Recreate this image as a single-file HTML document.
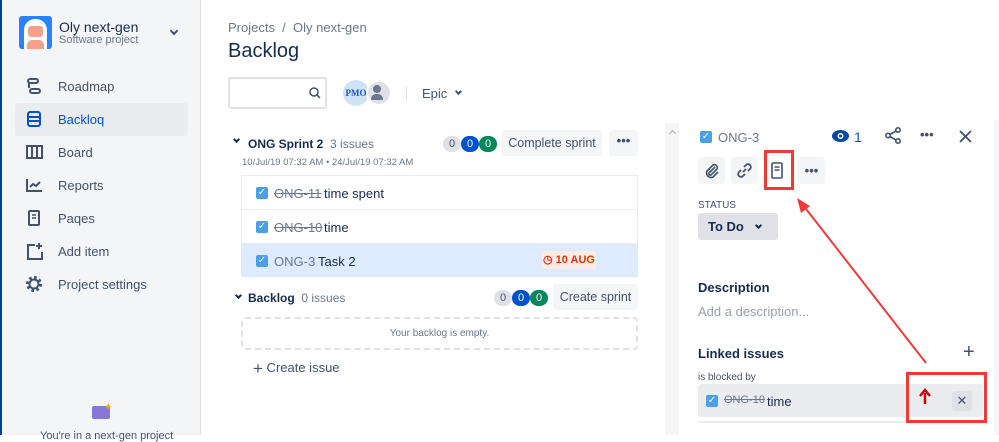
<!DOCTYPE html>
<html><head><meta charset="utf-8"><style>
*{box-sizing:border-box;margin:0;padding:0}
body{width:999px;height:435px;overflow:hidden;font-family:"Liberation Sans",sans-serif;background:#fff;position:relative;color:#172b4d}
.a{position:absolute}
.sb{left:0;top:0;width:201px;height:435px;background:#f4f5f7;border-left:2px solid #0b3d91;border-right:1px solid #dfe1e6}
.nav{left:15px;width:173px;height:33px;font-size:13px;color:#42526e;padding-left:43px;line-height:33px}
.ic{position:absolute;left:11px;top:8px}
.t{font-size:13px;white-space:nowrap}
.lz{border-radius:9px;width:18px;height:16px;font-size:11px;text-align:center;line-height:16px}
.btn{background:#f4f5f7;border-radius:3px;font-size:13px;color:#42526e;text-align:center}
.cb{width:12px;height:12px;background:#4a9fe6;border-radius:2px;color:#fff;font-size:10px;line-height:12px;text-align:center}
.row{left:241px;width:397px;height:34px;border-top:1px solid #ebecf0}
</style></head><body>
<div class="a sb"></div>
<div class="a" style="left:19px;top:16px;width:33px;height:33px;background:#2684ff;border-radius:3px;overflow:hidden">
<div class="a" style="left:5px;top:3px;width:23px;height:30px;background:#fff;border-radius:11px 11px 0 0"></div>
<div class="a" style="left:9px;top:10px;width:15px;height:11px;background:#f4a08a;border-radius:3px"></div>
<div class="a" style="left:8px;top:24px;width:17px;height:9px;background:#f4a08a;border-radius:5px 5px 0 0"></div></div>
<div class="a t" style="left:59px;top:19px;font-size:14px;color:#172b4d">Oly next-gen</div>
<div class="a t" style="left:59px;top:34px;font-size:11px;color:#6b778c">Software project</div>
<div class="a" style="left:171px;top:28px;width:6px;height:6px;border-right:2px solid #42526e;border-bottom:2px solid #42526e;transform:rotate(45deg)"></div>
<div class="a nav" style="top:70px">Roadmap<svg class="ic" width="16" height="16" viewBox="0 0 16 16" fill="none" stroke="#42526e" stroke-width="2"><rect x="2" y="1" width="10" height="4" rx="2"/><rect x="4" y="11" width="10" height="4" rx="2"/><path d="M3 5v5"/></svg></div>
<div class="a nav" style="top:103px;background:#ebecf0;border-radius:3px;color:#0052cc">Backloq<svg class="ic" width="16" height="16" viewBox="0 0 16 16" fill="none" stroke="#0052cc" stroke-width="2"><rect x="2" y="1" width="12" height="14" rx="2"/><path d="M2 6h12M2 10h12"/></svg></div>
<div class="a nav" style="top:136px">Board<svg class="ic" width="17" height="16" viewBox="0 0 17 16" fill="none" stroke="#42526e" stroke-width="2"><rect x="1" y="2" width="15" height="12"/><path d="M6 2v12M11 2v12"/></svg></div>
<div class="a nav" style="top:169px">Reports<svg class="ic" width="17" height="16" viewBox="0 0 17 16" fill="none" stroke="#42526e" stroke-width="2"><path d="M1 2v12h15M4 10l3-3 3 2 4-4"/></svg></div>
<div class="a nav" style="top:202px">Paqes<svg class="ic" width="16" height="16" viewBox="0 0 16 16" fill="none" stroke="#42526e" stroke-width="2"><rect x="3" y="1" width="10" height="14" rx="1"/><path d="M6 5h4M6 8h4" stroke-width="1.5"/></svg></div>
<div class="a nav" style="top:235px">Add item<svg class="ic" width="17" height="17" viewBox="0 0 17 17" fill="none" stroke="#42526e" stroke-width="2"><path d="M9 2H2v14h14V9M13 0v6M10 3h6"/></svg></div>
<div class="a nav" style="top:268px">Project settings<svg class="ic" width="16" height="16" viewBox="0 0 16 16"><circle cx="8" cy="8" r="6" fill="none" stroke="#42526e" stroke-width="4" stroke-dasharray="2.4 2.3"/><circle cx="8" cy="8" r="4.5" fill="none" stroke="#42526e" stroke-width="2"/></svg></div>
<div class="a" style="left:92px;top:406px;width:18px;height:13px;background:#8777d9;border-radius:2px"></div>
<div class="a" style="left:104px;top:402px;color:#ffab00;font-size:10px">✦</div>
<div class="a t" style="left:40px;top:430px;font-size:11px;color:#42526e">You're in a next-gen project</div>

<div class="a t" style="left:228px;top:20px;color:#6b778c">Projects &nbsp;/ &nbsp;Oly next-gen</div>
<div class="a t" style="left:228px;top:40px;font-size:20px;color:#172b4d">Backlog</div>
<div class="a" style="left:228px;top:77px;width:99px;height:32px;border:2px solid #dfe1e6;border-radius:3px"></div>
<svg class="a" style="left:309px;top:87px" width="12" height="12" viewBox="0 0 12 12" fill="none" stroke="#42526e" stroke-width="1.5"><circle cx="5" cy="5" r="4"/><path d="M8 8l3 3"/></svg>
<div class="a" style="left:343px;top:80px;width:26px;height:26px;border-radius:50%;background:#cfe3f7;font:bold 9px 'Liberation Serif',serif;color:#1b57d0;text-align:center;line-height:26px">PMO</div>
<div class="a" style="left:366px;top:80px;width:26px;height:26px;border-radius:50%;background:#dfe1e6;border:2px solid #fff"></div>
<div class="a" style="left:373px;top:85px;width:8px;height:8px;border-radius:50%;background:#6b778c"></div>
<div class="a" style="left:371px;top:94px;width:12px;height:6px;border-radius:5px 5px 0 0;background:#6b778c"></div>
<div class="a" style="left:406px;top:86px;width:1px;height:14px;background:#dfe1e6"></div>
<div class="a t" style="left:422px;top:86px;color:#42526e">Epic</div>
<div class="a" style="left:456px;top:89px;width:5px;height:5px;border-right:2px solid #42526e;border-bottom:2px solid #42526e;transform:rotate(45deg)"></div>

<div class="a" style="left:234px;top:137px;width:5px;height:5px;border-right:2px solid #172b4d;border-bottom:2px solid #172b4d;transform:rotate(45deg)"></div>
<div class="a t" style="left:248px;top:137px;font-size:12px;font-weight:bold;color:#172b4d">ONG Sprint 2 <span style="font-weight:normal;color:#6b778c">&nbsp;3 issues</span></div>
<div class="a t" style="left:242px;top:157px;font-size:9.5px;color:#6b778c">10/Jul/19 07:32 AM • 24/Jul/19 07:32 AM</div>
<div class="a lz" style="left:443px;top:136px;background:#dfe1e6;color:#42526e">0</div>
<div class="a lz" style="left:461px;top:136px;background:#0052cc;color:#fff">0</div>
<div class="a lz" style="left:479px;top:136px;background:#00875a;color:#fff">0</div>
<div class="a btn" style="left:502px;top:130px;width:100px;height:26px;line-height:26px;font-size:12.5px">Complete sprint</div>
<div class="a btn" style="left:609px;top:130px;width:29px;height:26px;line-height:22px;font-weight:bold">•••</div>
<div class="a" style="left:241px;top:175px;width:397px;height:102px;border:1px solid #ebecf0"></div>
<div class="a row" style="top:176px;border:none"><div class="a cb" style="left:15px;top:11px">✓</div><div class="a t" style="left:33px;top:10px;color:#6b778c;text-decoration:line-through">ONG-11</div><div class="a t" style="left:83px;top:10px">time spent</div></div>
<div class="a row" style="top:209px"><div class="a cb" style="left:15px;top:11px">✓</div><div class="a t" style="left:33px;top:10px;color:#6b778c;text-decoration:line-through">ONG-10</div><div class="a t" style="left:83px;top:10px">time</div></div>
<div class="a row" style="top:243px;background:#deebff"><div class="a cb" style="left:15px;top:11px">✓</div><div class="a t" style="left:33px;top:10px;color:#6b778c">ONG-3</div><div class="a t" style="left:77px;top:10px">Task 2</div>
<div class="a" style="left:301px;top:7px;width:54px;height:18px;background:#ffebe6;border-radius:3px;color:#de350b;font-size:11px;font-weight:bold;line-height:18px;text-align:center">◷ 10 AUG</div></div>
<div class="a" style="left:236px;top:293px;width:5px;height:5px;border-right:2px solid #172b4d;border-bottom:2px solid #172b4d;transform:rotate(45deg)"></div>
<div class="a t" style="left:248px;top:291px;font-size:12px;font-weight:bold">Backlog <span style="font-weight:normal;color:#6b778c">&nbsp;0 issues</span></div>
<div class="a lz" style="left:494px;top:290px;background:#dfe1e6;color:#42526e">0</div>
<div class="a lz" style="left:512px;top:290px;background:#0052cc;color:#fff">0</div>
<div class="a lz" style="left:530px;top:290px;background:#00875a;color:#fff">0</div>
<div class="a btn" style="left:553px;top:284px;width:85px;height:26px;line-height:26px;font-size:12.5px">Create sprint</div>
<div class="a" style="left:241px;top:317px;width:397px;height:33px;border:2px dashed #dfe1e6;border-radius:4px;font-size:10px;color:#6b778c;text-align:center;line-height:29px">Your backlog is empty.</div>
<div class="a t" style="left:253px;top:359px;color:#42526e"><span style="font-size:17px;vertical-align:-2px">+</span> Create issue</div>

<div class="a" style="left:665px;top:123px;width:14px;height:312px;background:#f4f5f7"></div>
<div class="a" style="left:670px;top:131px;width:5px;height:5px;border-left:1px solid #aaa;border-top:1px solid #aaa;transform:rotate(45deg)"></div>
<div class="a" style="left:994px;top:120px;width:5px;height:315px;background:#f4f5f7"></div>
<div class="a cb" style="left:700px;top:131px">✓</div>
<div class="a t" style="left:718px;top:130px;color:#6b778c">ONG-3</div>
<svg class="a" style="left:832px;top:129px" width="17" height="14" viewBox="0 0 17 14"><ellipse cx="8.5" cy="7" rx="8.5" ry="6" fill="#0747a6"/><circle cx="8.5" cy="7" r="3" fill="#fff"/><circle cx="8.5" cy="7" r="1.5" fill="#0747a6"/></svg>
<div class="a t" style="left:854px;top:129px;color:#0052cc;font-size:14px">1</div>
<svg class="a" style="left:885px;top:127px" width="16" height="17" viewBox="0 0 16 17" fill="none" stroke="#42526e" stroke-width="1.6"><circle cx="13" cy="3" r="2.2"/><circle cx="3" cy="8.5" r="2.2"/><circle cx="13" cy="14" r="2.2"/><path d="M5 7.5l6-3.5M5 9.5l6 3.5"/></svg>
<div class="a t" style="left:920px;top:127px;font-weight:bold;color:#42526e">•••</div>
<svg class="a" style="left:959px;top:130px" width="13" height="13" viewBox="0 0 13 13" stroke="#42526e" stroke-width="1.8"><path d="M1 1l11 11M12 1L1 12"/></svg>
<div class="a btn" style="left:698px;top:157px;width:27px;height:27px"></div>
<div class="a btn" style="left:731px;top:157px;width:27px;height:27px"></div>
<div class="a btn" style="left:798px;top:157px;width:27px;height:27px;font-weight:bold;line-height:27px">•••</div>
<svg class="a" style="left:703px;top:162px" width="17" height="17" viewBox="0 0 17 17" fill="none" stroke="#42526e" stroke-width="1.6"><path d="M12 5l-6 6a1.5 1.5 0 0 0 2 2l6-6a3 3 0 0 0-4-4l-6 6a4.5 4.5 0 0 0 6 6l5-5"/></svg>
<svg class="a" style="left:736px;top:162px" width="17" height="17" viewBox="0 0 17 17" fill="none" stroke="#42526e" stroke-width="1.8"><path d="M7 10l3-3M8 5l2-2a2.8 2.8 0 0 1 4 4l-2 2M9 12l-2 2a2.8 2.8 0 0 1-4-4l2-2"/></svg>
<svg class="a" style="left:771px;top:162px" width="12" height="17" viewBox="0 0 12 17" fill="none" stroke="#42526e" stroke-width="1.6"><rect x="1" y="1" width="10" height="15" rx="1"/><path d="M3.5 5h5M3.5 8h5"/></svg>
<div class="a" style="left:764px;top:150px;width:30px;height:40px;border:3px solid #f03a3a"></div>
<div class="a t" style="left:698px;top:200px;font-size:10px;color:#42526e">STATUS</div>
<div class="a" style="left:698px;top:213px;width:80px;height:27px;background:#dfe1e6;border-radius:3px;font-weight:bold;font-size:13px;line-height:27px;padding-left:10px;color:#172b4d">To Do</div>
<div class="a" style="left:756px;top:223px;width:5px;height:5px;border-right:2px solid #172b4d;border-bottom:2px solid #172b4d;transform:rotate(45deg)"></div>
<div class="a t" style="left:698px;top:280px;font-weight:bold">Description</div>
<div class="a t" style="left:698px;top:304px;color:#97a0af">Add a description...</div>
<div class="a t" style="left:698px;top:346px;font-weight:bold">Linked issues</div>
<div class="a t" style="left:963px;top:341px;font-size:20px;color:#42526e">+</div>
<div class="a t" style="left:698px;top:372px;font-size:10px;color:#42526e">is blocked by</div>
<div class="a" style="left:698px;top:384px;width:285px;height:33px;background:#ebecf0;border-radius:3px"></div>
<div class="a" style="left:698px;top:421px;width:285px;height:2px;background:#ebecf0"></div>
<div class="a cb" style="left:706px;top:395px">✓</div>
<div class="a t" style="left:724px;top:394px;font-size:11px;color:#6b778c;text-decoration:line-through">ONG-10</div>
<div class="a t" style="left:767px;top:394px">time</div>
<div class="a" style="left:952px;top:391px;width:20px;height:20px;background:#dfe1e6;border-radius:3px;text-align:center;line-height:20px;font-size:13px;color:#42526e">✕</div>
<div class="a" style="left:906px;top:372px;width:81px;height:51px;border:3px solid #f03a3a"></div>
<svg class="a" style="left:0;top:0" width="999" height="435"><path d="M925 404V393" stroke="#c00" stroke-width="2.5"/><path d="M920 396l5-6 5 6" fill="none" stroke="#c00" stroke-width="2.5"/>
<path d="M926 363L803 205" stroke="#f03a3a" stroke-width="2"/><path d="M797 198l4 15 9-7z" fill="#f03a3a"/></svg>
</body></html>
